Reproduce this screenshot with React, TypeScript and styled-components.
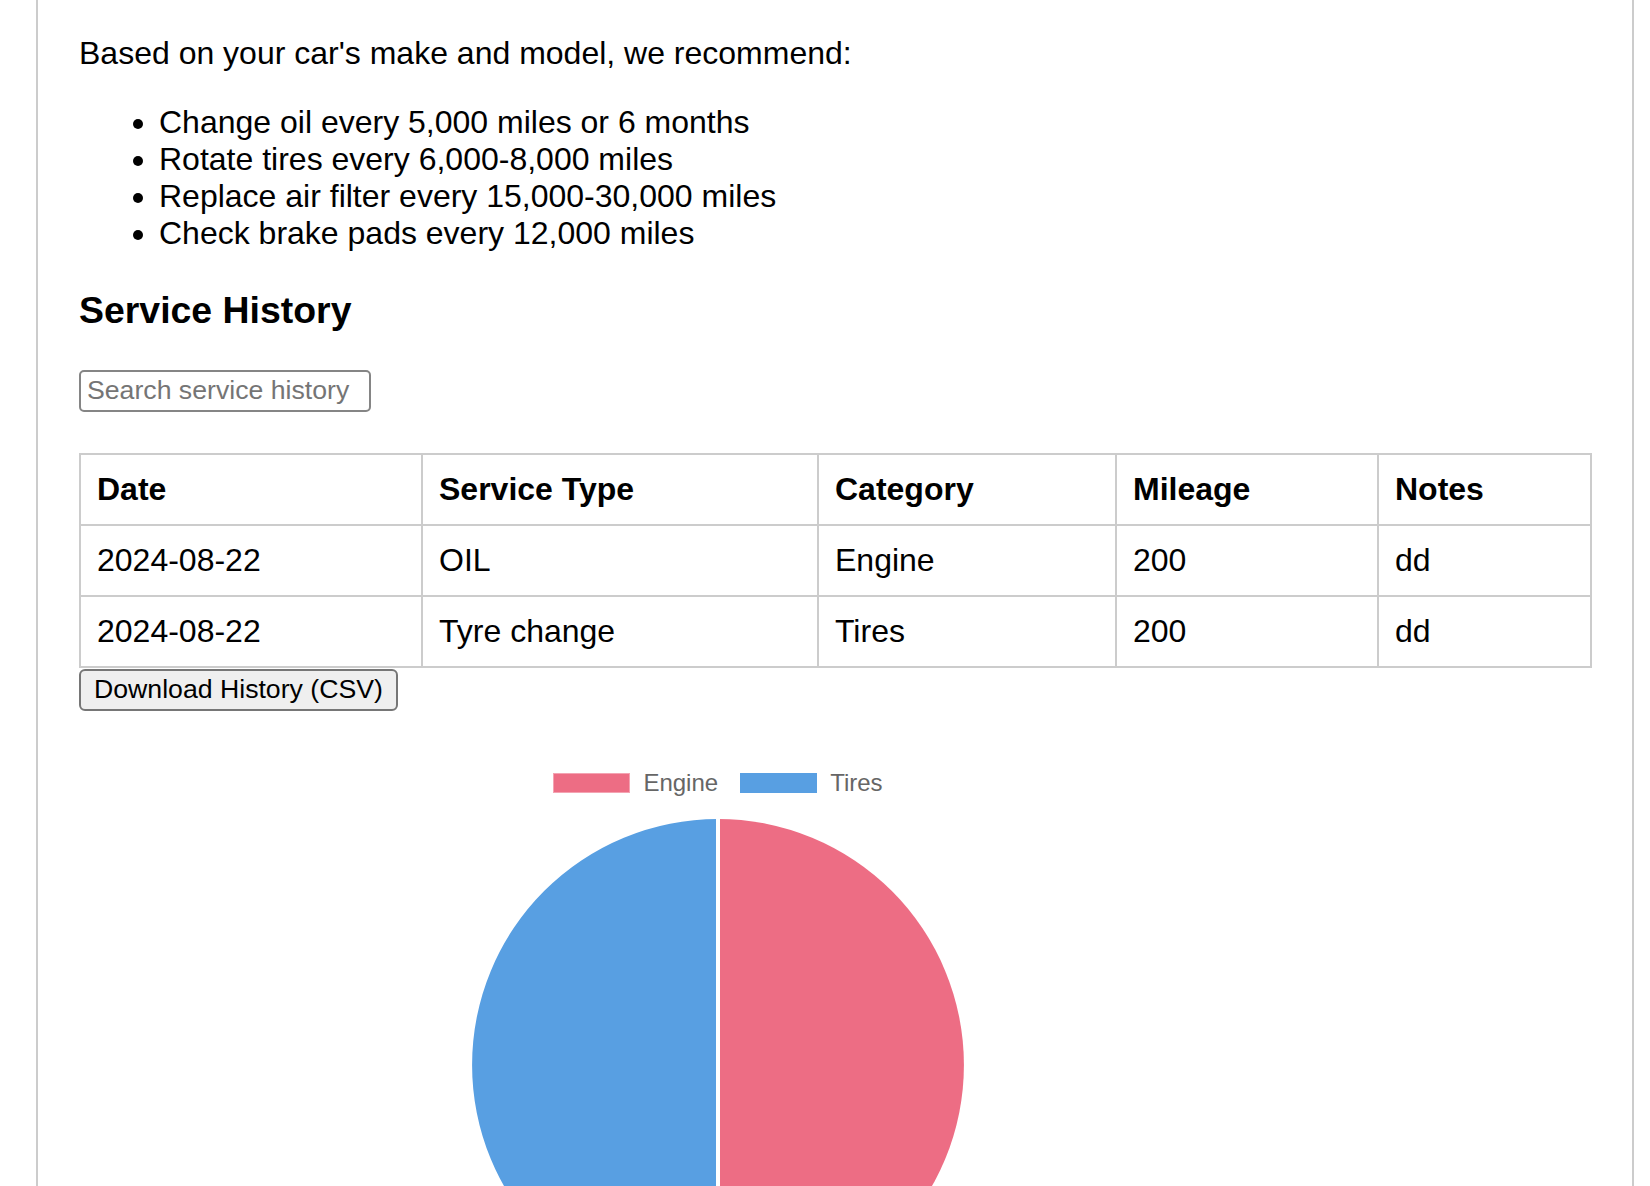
import React from "react";
import styled, { createGlobalStyle } from "styled-components";

const GlobalStyle = createGlobalStyle`
  html, body {
    margin: 0;
    padding: 0;
    background: #ffffff;
  }
  body {
    font-family: "Liberation Sans", Arial, Helvetica, sans-serif;
    color: #000000;
  }
`;

const Page = styled.div`
  margin-left: 36px;
  width: 1598px;
  box-sizing: border-box;
  border: 2px solid #cccccc;
  border-top: none;
  padding: 3px 41px 40px 41px;
  font-size: 32px;
`;

const Intro = styled.p`
  margin: 32px 0;
  font-size: 32px;
  line-height: normal;
`;

const TipList = styled.ul`
  margin: 32px 0;
  padding-left: 80px;
  list-style: disc;
`;

const Tip = styled.li`
  font-size: 32px;
  line-height: normal;
`;

const SectionTitle = styled.h3`
  font-size: 37.44px;
  font-weight: bold;
  margin: 37.44px 0;
  line-height: normal;
`;

const SearchInput = styled.input`
  display: block;
  box-sizing: border-box;
  width: 292px;
  height: 42px;
  margin: 2px 0 41px 0;
  padding: 0 6px;
  border: 2px solid #858585;
  border-radius: 5px;
  font-family: "Liberation Sans", Arial, sans-serif;
  font-size: 26.67px;
  color: #000;
  background: #fff;
  outline: none;
  &::placeholder {
    color: #757575;
  }
`;

const HistoryTable = styled.table`
  width: 1511px;
  table-layout: fixed;
  border-collapse: collapse;
`;

const HeadCell = styled.th<{ $w: number }>`
  box-sizing: border-box;
  width: ${(p) => p.$w}px;
  border: 2px solid #cccccc;
  padding: 16px;
  text-align: left;
  font-weight: bold;
  font-size: 32px;
  line-height: normal;
`;

const Cell = styled.td`
  border: 2px solid #cccccc;
  padding: 16px;
  text-align: left;
  font-size: 32px;
  line-height: normal;
`;

const DownloadButton = styled.button`
  display: block;
  box-sizing: border-box;
  height: 42px;
  margin-top: 1px;
  padding: 0 13px;
  border: 2px solid #767676;
  border-radius: 6px;
  background: #efefef;
  color: #000;
  font-family: "Liberation Sans", Arial, sans-serif;
  font-size: 26.67px;
  cursor: pointer;
`;

const ChartBox = styled.div`
  width: 1278px;
  margin-top: 52px;
  display: flex;
  flex-direction: column;
  align-items: center;
`;

const Legend = styled.div`
  height: 40px;
  display: flex;
  align-items: center;
  gap: 22px;
`;

const LegendItem = styled.div`
  display: flex;
  align-items: center;
  gap: 13px;
  font-size: 24px;
  color: #666666;
  font-family: "Liberation Sans", Helvetica, Arial, sans-serif;
`;

const Swatch = styled.span<{ $color: string; $edge: string }>`
  display: inline-block;
  width: 77px;
  height: 20px;
  box-sizing: border-box;
  background: ${(p) => p.$color};
  border: 1px solid ${(p) => p.$edge};
`;

const PieWrap = styled.div`
  margin-top: 16px;
  width: 492px;
  height: 492px;
`;

const PINK = "#ED6D84";
const BLUE = "#589FE2";

const tips = [
  "Change oil every 5,000 miles or 6 months",
  "Rotate tires every 6,000-8,000 miles",
  "Replace air filter every 15,000-30,000 miles",
  "Check brake pads every 12,000 miles",
];

const columns: { label: string; w: number }[] = [
  { label: "Date", w: 342 },
  { label: "Service Type", w: 396 },
  { label: "Category", w: 298 },
  { label: "Mileage", w: 262 },
  { label: "Notes", w: 213 },
];

const rows = [
  ["2024-08-22", "OIL", "Engine", "200", "dd"],
  ["2024-08-22", "Tyre change", "Tires", "200", "dd"],
];

export default function App() {
  return (
    <>
      <GlobalStyle />
      <Page>
        <Intro>Based on your car's make and model, we recommend:</Intro>
        <TipList>
          {tips.map((t) => (
            <Tip key={t}>{t}</Tip>
          ))}
        </TipList>
        <SectionTitle>Service History</SectionTitle>
        <SearchInput type="text" placeholder="Search service history" />
        <HistoryTable>
          <thead>
            <tr>
              {columns.map((c) => (
                <HeadCell key={c.label} $w={c.w}>
                  {c.label}
                </HeadCell>
              ))}
            </tr>
          </thead>
          <tbody>
            {rows.map((r, i) => (
              <tr key={i}>
                {r.map((v, j) => (
                  <Cell key={j}>{v}</Cell>
                ))}
              </tr>
            ))}
          </tbody>
        </HistoryTable>
        <DownloadButton>Download History (CSV)</DownloadButton>
        <ChartBox>
          <Legend>
            <LegendItem>
              <Swatch $color={PINK} $edge="#F4A3B2" />
              Engine
            </LegendItem>
            <LegendItem>
              <Swatch $color={BLUE} $edge={BLUE} />
              Tires
            </LegendItem>
          </Legend>
          <PieWrap>
            <svg width="492" height="492" viewBox="0 0 492 492">
              <path d="M246 246 L246 0 A246 246 0 0 1 246 492 Z" fill={PINK} />
              <path d="M246 246 L246 492 A246 246 0 0 1 246 0 Z" fill={BLUE} />
              <line x1="246" y1="0" x2="246" y2="492" stroke="#ffffff" strokeWidth="4" />
            </svg>
          </PieWrap>
        </ChartBox>
      </Page>
    </>
  );
}
